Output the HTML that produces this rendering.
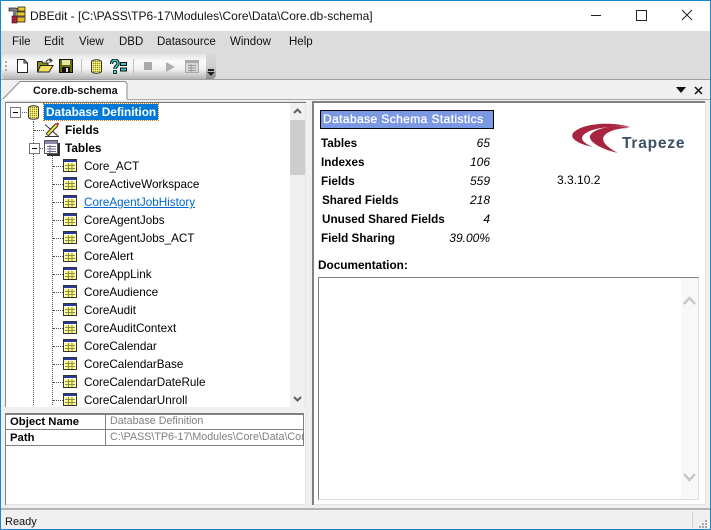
<!DOCTYPE html>
<html><head><meta charset="utf-8"><style>
html,body{margin:0;padding:0;width:711px;height:530px;overflow:hidden;background:#f0f0f0}
body{position:relative;font-family:"Liberation Sans",sans-serif;font-size:12px;color:#000}
.a,.t,.m,.r,.l,.v,svg{position:absolute}
.t{white-space:nowrap;line-height:18px;height:18px;left:84px;font-size:11.7px;margin-top:1px}
.m{top:35px;line-height:15px;font-size:11.5px;color:#111;white-space:nowrap}
.l{left:321px;font-weight:bold;font-size:11.7px;line-height:16px;white-space:nowrap;margin-top:1px}
.v{right:221px;font-style:italic;font-size:12px;line-height:16px;white-space:nowrap}
.h{position:absolute;border-top:1px dotted #555;height:0}
.w{position:absolute;border-left:1px dotted #555;width:0}
</style></head><body>
<svg width="0" height="0" style="left:0;top:0"><defs>
<pattern id="dz" width="2" height="2" patternUnits="userSpaceOnUse"><rect width="2" height="2" fill="#e8de50"/><rect width="1" height="1" fill="#8a8420"/><rect x="1" y="1" width="1" height="1" fill="#fffab0"/></pattern>
<symbol id="tb" viewBox="0 0 14 13"><rect x="0.5" y="0.5" width="13" height="12" fill="#fff" stroke="#333"/><rect x="1" y="1" width="12" height="2" fill="#2a3a9a"/><rect x="2" y="4" width="10" height="8" fill="#ffff70"/><path d="M2 6.500H12M2 9.500H12M5.500 4V12M9 4V12" stroke="#8a8a50" stroke-width="1"/></symbol>
<symbol id="db" viewBox="0 0 11 15"><path d="M.5 3C.5 0 10.500 0 10.500 3V12C10.500 15 .5 15 .5 12Z" fill="url(#dz)" stroke="#333"/></symbol>
</defs></svg>

<!-- window -->
<div class="a" style="left:0;top:0;width:711px;height:31px;background:#fff"></div>
<div class="a" style="left:0;top:31px;width:711px;height:48px;background:#dcdcdc"></div>
<div class="a" style="left:0;top:0;width:711px;height:1px;background:#1a86d0"></div>
<div class="a" style="left:0;top:0;width:1px;height:530px;background:#1a86d0;z-index:9"></div>
<div class="a" style="left:710px;top:0;width:1px;height:530px;background:#1a86d0;z-index:9"></div>
<div class="a" style="left:0;top:529px;width:711px;height:1px;background:#1a86d0;z-index:9"></div>

<!-- title bar -->
<svg style="left:8px;top:6px" width="19" height="18" viewBox="0 0 19 18"><path d="M1 2H8L12 4V7L8 5H1Z" fill="#888" stroke="#222" stroke-width=".7"/><rect x="5" y="4" width="3" height="6" fill="#777"/><rect x="10" y="1" width="7" height="4" fill="#f0d020" stroke="#222" stroke-width=".8"/><rect x="9" y="6" width="8" height="4" fill="#f0d020" stroke="#222" stroke-width=".8"/><rect x="9" y="11" width="8" height="5" fill="#e0b820" stroke="#222" stroke-width=".8"/><rect x="4" y="10" width="5" height="7" fill="#a82040" stroke="#311" stroke-width=".6"/></svg>
<div class="a" style="left:30px;top:8px;font-size:12px;line-height:16px;color:#111;white-space:nowrap">DBEdit - [C:\PASS\TP6-17\Modules\Core\Data\Core.db-schema]</div>
<div class="a" style="left:591px;top:15px;width:10px;height:1px;background:#222"></div>
<div class="a" style="left:636px;top:10px;width:9px;height:9px;border:1px solid #222"></div>
<svg style="left:681px;top:9px" width="12" height="12" viewBox="0 0 12 12"><path d="M1 1L11 11M11 1L1 11" stroke="#222" fill="none"/></svg>

<!-- menu -->
<div class="m" style="left:12px">File</div>
<div class="m" style="left:44px">Edit</div>
<div class="m" style="left:79px">View</div>
<div class="m" style="left:119px">DBD</div>
<div class="m" style="left:157px">Datasource</div>
<div class="m" style="left:230px">Window</div>
<div class="m" style="left:289px">Help</div>

<!-- toolbar -->
<div class="a" style="left:2px;top:54px;width:214px;height:25px;border-radius:4px;background:linear-gradient(#e4e4e4,#fafafa 30%,#f2f2f2 60%,#b4b4b4)"></div>
<div class="a" style="left:206px;top:54px;width:10px;height:25px;border-radius:0 4px 4px 0;background:linear-gradient(#d8d8d8,#d0d0d0 50%,#8a8a8a)"></div>
<div class="a" style="left:5px;top:61px;width:2px;height:12px;background:repeating-linear-gradient(#aaa 0 2px,transparent 2px 4px)"></div>
<svg style="left:17px;top:59px" width="12" height="14" viewBox="0 0 12 14"><path d="M.5 .5H7L10.500 4V13.500H.5Z" fill="#fff" stroke="#222"/><path d="M7 .5V4H10.500" fill="none" stroke="#222"/></svg>
<svg style="left:37px;top:58px" width="17" height="15" viewBox="0 0 17 15"><path d="M.5 3.500H5L6 5H11V14H.5Z" fill="#8a8a20" stroke="#222"/><path d="M.5 14L3.500 7.500H16L12 14Z" fill="#f0e060" stroke="#222"/><path d="M9 4C10 1.500 12 1.500 14.500 2.500M12.500 .5L15 2.500L12.500 4.500" fill="none" stroke="#222"/></svg>
<svg style="left:59px;top:59px" width="14" height="14" viewBox="0 0 14 14"><rect x=".5" y=".5" width="13" height="13" fill="#6a6a10" stroke="#111"/><rect x="3" y="1" width="8" height="5" fill="#e4e4a8"/><rect x="3" y="8" width="8" height="5.500" fill="#111"/><rect x="7" y="9" width="2" height="4" fill="#ddd"/></svg>
<div class="a" style="left:81px;top:59px;width:1px;height:15px;background:#c0c0c0"></div>
<svg style="left:91px;top:59px" width="11" height="15"><use href="#db" width="11" height="15"/></svg>
<svg style="left:110px;top:59px" width="17" height="15" viewBox="0 0 17 15"><path d="M1.500 5C1.500 0 8 0 8 4.500C8 7 5 7 5 10" fill="none" stroke="#111" stroke-width="3.400"/><path d="M1.500 5C1.500 0 8 0 8 4.500C8 7 5 7 5 10" fill="none" stroke="#30e0e0" stroke-width="1.400"/><rect x="3.500" y="11.500" width="3" height="3" fill="#30e0e0" stroke="#111" stroke-width=".8"/><rect x="10.500" y="3.500" width="6" height="3" fill="#30c8d8" stroke="#111"/><rect x="10.500" y="9" width="6" height="3" fill="#30c8d8" stroke="#111"/></svg>
<div class="a" style="left:133px;top:59px;width:1px;height:15px;background:#c0c0c0"></div>
<div class="a" style="left:144px;top:62px;width:8px;height:8px;background:#a8a8a8"></div>
<svg style="left:166px;top:62px" width="9" height="10" viewBox="0 0 9 10"><path d="M0 0L9 5L0 10Z" fill="#b0b0b0"/></svg>
<svg style="left:185px;top:60px" width="14" height="13" viewBox="0 0 14 13"><rect x=".5" y=".5" width="13" height="12" fill="#d8d8d8" stroke="#aaa"/><rect x="1" y="1" width="12" height="2" fill="#a8a8a8"/><path d="M3 5.500H11M3 8H11M3 10.500H11M6 4V12" stroke="#999"/></svg>
<div class="a" style="left:208px;top:69px;width:6px;height:2px;background:#222"></div>
<svg style="left:207px;top:72px" width="8" height="4"><path d="M0 0H8L4 4Z" fill="#222"/></svg>

<!-- tab row -->
<div class="a" style="left:0;top:79px;width:711px;height:21px;background:#f0f0f0;border-top:1px solid #a0a0a0;box-sizing:border-box"></div>
<svg style="left:1px;top:80px" width="130" height="21" viewBox="0 0 130 21"><path d="M1 20L19 1.500H124L126 3.500V20" fill="#fff" stroke="#888"/></svg>
<div class="a" style="left:33px;top:84px;font-weight:bold;font-size:10.800px;line-height:15px;color:#111;white-space:nowrap">Core.db-schema</div>
<div class="a" style="left:0;top:99px;width:711px;height:1px;background:#aaa"></div>
<div class="a" style="left:2px;top:99px;width:125px;height:1px;background:#fff"></div>
<svg style="left:676px;top:87px" width="10" height="6"><path d="M0 0H10L5 6Z" fill="#111"/></svg>
<svg style="left:694px;top:86px" width="9" height="9" viewBox="0 0 9 9"><path d="M1 1L8 8M8 1L1 8" stroke="#111" stroke-width="1.500" fill="none"/></svg>

<!-- left pane -->
<div class="a" style="left:5px;top:101px;width:301px;height:404px;background:#fff;border:1px solid #e4e4e4;box-sizing:border-box"></div>
<div class="a" style="left:5px;top:102px;width:301px;height:1px;background:#777"></div>
<div class="a" style="left:5px;top:102px;width:1px;height:305px;background:#888"></div>

<!-- tree scrollbar -->
<div class="a" style="left:290px;top:103px;width:15px;height:304px;background:#f0f0f0"></div>
<div class="a" style="left:290px;top:120px;width:15px;height:55px;background:#cdcdcd"></div>
<svg style="left:293px;top:108px" width="9" height="6" viewBox="0 0 9 6"><path d="M1 5L4.500 1.500L8 5" fill="none" stroke="#606060" stroke-width="2"/></svg>
<svg style="left:293px;top:396px" width="9" height="6" viewBox="0 0 9 6"><path d="M1 1L4.500 4.500L8 1" fill="none" stroke="#606060" stroke-width="2"/></svg>

<!-- tree lines -->
<div class="w" style="left:33px;top:121px;height:284px"></div>
<div class="w" style="left:52px;top:155px;height:250px"></div>
<div class="h" style="left:20px;top:112px;width:7px"></div>
<div class="h" style="left:34px;top:130px;width:10px"></div>
<div class="h" style="left:39px;top:148px;width:4px"></div>
<div class="h" style="left:53px;top:166px;width:10px"></div><div class="h" style="left:53px;top:184px;width:10px"></div><div class="h" style="left:53px;top:202px;width:10px"></div><div class="h" style="left:53px;top:220px;width:10px"></div><div class="h" style="left:53px;top:238px;width:10px"></div><div class="h" style="left:53px;top:256px;width:10px"></div><div class="h" style="left:53px;top:274px;width:10px"></div><div class="h" style="left:53px;top:292px;width:10px"></div><div class="h" style="left:53px;top:310px;width:10px"></div><div class="h" style="left:53px;top:328px;width:10px"></div><div class="h" style="left:53px;top:346px;width:10px"></div><div class="h" style="left:53px;top:364px;width:10px"></div><div class="h" style="left:53px;top:382px;width:10px"></div><div class="h" style="left:53px;top:400px;width:10px"></div>

<!-- expanders -->
<div class="a" style="left:10px;top:107px;width:9px;height:9px;border:1px solid #777;background:#fff"><div class="a" style="left:2px;top:4px;width:5px;height:1px;background:#000"></div></div>
<div class="a" style="left:29px;top:143px;width:9px;height:9px;border:1px solid #777;background:#fff"><div class="a" style="left:2px;top:4px;width:5px;height:1px;background:#000"></div></div>

<!-- tree top icons -->
<svg style="left:28px;top:105px" width="11" height="15"><use href="#db" width="11" height="15"/></svg>
<div class="a" style="left:44px;top:104px;width:114px;height:16px;background:#0078d7;outline:1px dotted #c08030;outline-offset:0"></div>
<div class="a" style="left:46px;top:104px;color:#fff;font-weight:bold;font-size:11.800px;line-height:16px;white-space:nowrap">Database Definition</div>
<svg style="left:45px;top:122px" width="15" height="16" viewBox="0 0 15 16"><path d="M0 2.500L13 14M0 14.500H14" fill="none" stroke="#333"/><path d="M2 13L12 2.500" fill="none" stroke="#222" stroke-width="4"/><path d="M2.500 12.500L12 2.500" fill="none" stroke="#f0e040" stroke-width="2.200"/><path d="M11.500 3L13.500 1" stroke="#d02030" stroke-width="2.200"/></svg>
<div class="a" style="left:65px;top:122px;font-weight:bold;font-size:11.800px;line-height:16px">Fields</div>
<svg style="left:44px;top:140px" width="17" height="17" viewBox="0 0 17 17"><rect x="3" y="3" width="13" height="13" fill="#333"/><rect x=".5" y=".5" width="13" height="13" fill="#fff" stroke="#555"/><rect x="1" y="1" width="12" height="3" fill="#8888a8"/><path d="M3 6.500H12M3 9H12M3 11.500H12M6 5V13" stroke="#6a6a90"/></svg>
<div class="a" style="left:65px;top:140px;font-weight:bold;font-size:11.800px;line-height:16px">Tables</div>

<!-- tree tables -->
<svg style="left:63px;top:159px" width="14" height="13"><use href="#tb" width="14" height="13"/></svg><div class="t" style="top:157px">Core_ACT</div>
<svg style="left:63px;top:177px" width="14" height="13"><use href="#tb" width="14" height="13"/></svg><div class="t" style="top:175px">CoreActiveWorkspace</div>
<svg style="left:63px;top:195px" width="14" height="13"><use href="#tb" width="14" height="13"/></svg><div class="t" style="top:193px;color:#0066cc;text-decoration:underline">CoreAgentJobHistory</div>
<svg style="left:63px;top:213px" width="14" height="13"><use href="#tb" width="14" height="13"/></svg><div class="t" style="top:211px">CoreAgentJobs</div>
<svg style="left:63px;top:231px" width="14" height="13"><use href="#tb" width="14" height="13"/></svg><div class="t" style="top:229px">CoreAgentJobs_ACT</div>
<svg style="left:63px;top:249px" width="14" height="13"><use href="#tb" width="14" height="13"/></svg><div class="t" style="top:247px">CoreAlert</div>
<svg style="left:63px;top:267px" width="14" height="13"><use href="#tb" width="14" height="13"/></svg><div class="t" style="top:265px">CoreAppLink</div>
<svg style="left:63px;top:285px" width="14" height="13"><use href="#tb" width="14" height="13"/></svg><div class="t" style="top:283px">CoreAudience</div>
<svg style="left:63px;top:303px" width="14" height="13"><use href="#tb" width="14" height="13"/></svg><div class="t" style="top:301px">CoreAudit</div>
<svg style="left:63px;top:321px" width="14" height="13"><use href="#tb" width="14" height="13"/></svg><div class="t" style="top:319px">CoreAuditContext</div>
<svg style="left:63px;top:339px" width="14" height="13"><use href="#tb" width="14" height="13"/></svg><div class="t" style="top:337px">CoreCalendar</div>
<svg style="left:63px;top:357px" width="14" height="13"><use href="#tb" width="14" height="13"/></svg><div class="t" style="top:355px">CoreCalendarBase</div>
<svg style="left:63px;top:375px" width="14" height="13"><use href="#tb" width="14" height="13"/></svg><div class="t" style="top:373px">CoreCalendarDateRule</div>
<svg style="left:63px;top:393px" width="14" height="13"><use href="#tb" width="14" height="13"/></svg><div class="t" style="top:391px">CoreCalendarUnroll</div>

<!-- splitter + property grid -->
<div class="a" style="left:5px;top:407px;width:301px;height:6px;background:#f0f0f0"></div>
<div class="a" style="left:5px;top:413px;width:299px;height:33px;border:1px solid #808080;border-width:2px 1px 1px 1px;box-sizing:border-box"></div>
<div class="a" style="left:5px;top:429px;width:299px;height:1px;background:#808080"></div>
<div class="a" style="left:105px;top:413px;width:1px;height:33px;background:#808080"></div>
<div class="a" style="left:5px;top:413px;width:1px;height:92px;background:#808080"></div>
<div class="a" style="left:10px;top:415px;font-weight:bold;font-size:11.300px;line-height:15px">Object Name</div>
<div class="a" style="left:10px;top:431px;font-weight:bold;font-size:11.300px;line-height:15px">Path</div>
<div class="a" style="left:110px;top:414px;font-size:10.700px;line-height:15px;color:#808080;white-space:nowrap">Database Definition</div>
<div class="a" style="left:110px;top:430px;width:193px;overflow:hidden;font-size:10.700px;line-height:15px;color:#808080;white-space:nowrap">C:\PASS\TP6-17\Modules\Core\Data\Cor</div>

<!-- right pane -->
<div class="a" style="left:312px;top:101px;width:394px;height:404px;background:#fff;border-right:1px solid #e4e4e4;border-bottom:1px solid #e4e4e4;box-sizing:border-box"></div>
<div class="a" style="left:312px;top:101px;width:393px;height:2px;background:#808080"></div>
<div class="a" style="left:312px;top:101px;width:2px;height:404px;background:#808080"></div>
<div class="a" style="left:320px;top:110px;width:174px;height:19px;background:#7b98e2;border:1px solid #000;box-sizing:border-box"></div>
<div class="a" style="left:323px;top:111px;color:#fff;font-size:12px;letter-spacing:.4px;line-height:17px;white-space:nowrap;-webkit-text-stroke:.3px #fff">Database Schema Statistics</div>

<div class="l" style="top:135px">Tables</div><div class="v" style="top:135px">65</div>
<div class="l" style="top:154px">Indexes</div><div class="v" style="top:154px">106</div>
<div class="l" style="top:173px">Fields</div><div class="v" style="top:173px">559</div>
<div class="l" style="top:192px;left:322px">Shared Fields</div><div class="v" style="top:192px">218</div>
<div class="l" style="top:211px;left:322px">Unused Shared Fields</div><div class="v" style="top:211px">4</div>
<div class="l" style="top:230px">Field Sharing</div><div class="v" style="top:230px">39.00%</div>

<!-- logo -->
<svg style="left:570px;top:120px" width="62" height="36" viewBox="570 120 62 36"><path d="M630 127C615 122 585 122 574 132C568 138 578 144 593 147C583 143 578 138 586 133C595 127 615 126 630 127Z" fill="#a82540"/><path d="M630 128C615 125 598 127 591 134C585 141 603 150 618 153C610 149 600 142 604 136C609 130 620 128 630 128Z" fill="#a82540"/></svg>
<div class="a" style="left:622px;top:134px;font-weight:bold;font-size:15.500px;letter-spacing:.8px;line-height:20px;color:#3a5064;white-space:nowrap">Trapeze</div>
<div class="a" style="left:557px;top:172px;font-size:12px;line-height:16px;white-space:nowrap">3.3.10.2</div>

<div class="a" style="left:318px;top:257px;font-weight:bold;font-size:11.800px;line-height:16px;white-space:nowrap">Documentation:</div>

<!-- doc box -->
<div class="a" style="left:318px;top:277px;width:381px;height:223px;background:#fff;border:1px solid #e0e0e0;border-top:1px solid #808080;border-left:1px solid #808080;box-sizing:border-box"></div>
<div class="a" style="left:681px;top:278px;width:17px;height:221px;background:#f8f8f8"></div>
<svg style="left:683px;top:296px" width="13" height="9" viewBox="0 0 13 9"><path d="M1 8L6.500 2L12 8" fill="none" stroke="#c8c8c8" stroke-width="2.500"/></svg>
<svg style="left:683px;top:473px" width="13" height="9" viewBox="0 0 13 9"><path d="M1 1L6.500 7L12 1" fill="none" stroke="#c8c8c8" stroke-width="2.500"/></svg>

<!-- status bar -->
<div class="a" style="left:1px;top:508px;width:709px;height:2px;background:#b4b4b4"></div>
<div class="a" style="left:1px;top:510px;width:709px;height:19px;background:#f0f0f0"></div>
<div class="a" style="left:5px;top:515px;font-size:11px;line-height:15px;color:#111">Ready</div>
<div class="a" style="left:692px;top:512px;width:1px;height:16px;background:#d4d4d4"></div>
<svg style="left:699px;top:520px" width="8" height="8" viewBox="0 0 8 8"><path d="M6 0h2v2H6zM3 3h2v2H3zM6 3h2v2H6zM0 6h2v2H0zM3 6h2v2H3zM6 6h2v2H6z" fill="#a8a8a8"/></svg>
</body></html>
